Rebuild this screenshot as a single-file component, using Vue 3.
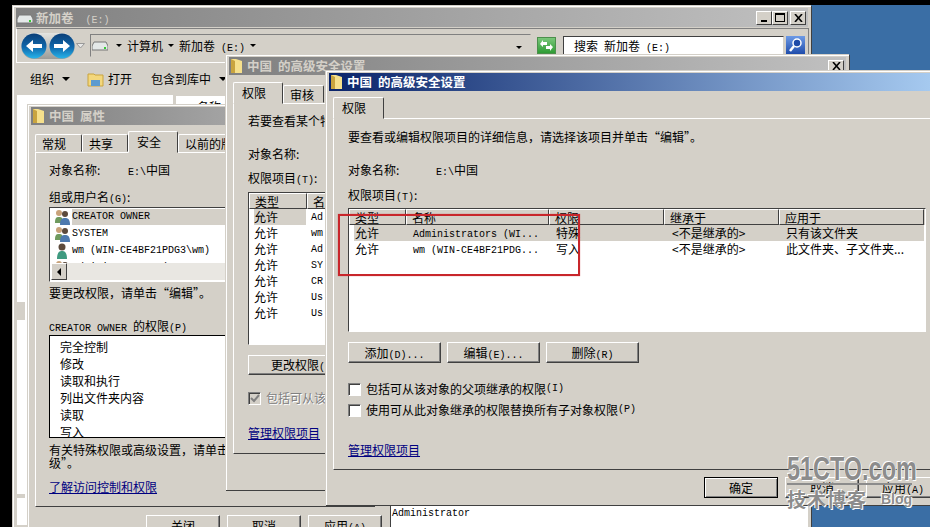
<script setup>
const propUsers = [
  { name: 'CREATOR OWNER', group: true },
  { name: 'SYSTEM', group: true },
  { name: 'wm (WIN-CE4BF21PDG3\\wm)', group: false },
  { name: 'Administrators (WIN-CE4BF21', group: true }
]
const propPerms = ['完全控制', '修改', '读取和执行', '列出文件夹内容', '读取', '写入']
const backRows = ['Ad', 'wm', 'Ad', 'SY', 'CR', 'Us', 'Us']
const columns = [
  { label: '类型', width: 57 },
  { label: '名称', width: 143 },
  { label: '权限', width: 115 },
  { label: '继承于', width: 115 },
  { label: '应用于', width: 145 }
]
const rows = [
  { type: '允许', name: 'Administrators (WI...', perm: '特殊', from: '<不是继承的>', to: '只有该文件夹' },
  { type: '允许', name: 'wm (WIN-CE4BF21PDG...', perm: '写入', from: '<不是继承的>', to: '此文件夹、子文件夹...' }
]
</script>

<template>
  <div class="desktop">
    <!-- explorer behind everything -->
    <section class="win explorer">
      <header class="title inactive">
        <svg width="16" height="12" viewBox="0 0 16 12"><path d="M2 3h12l2 4v4H0V7z" fill="#e4e8e8" stroke="#777" /><rect x="12" y="8" width="2" height="2" fill="#3c3" /></svg>
        <span class="title-text">新加卷<span class="m">&nbsp;&nbsp;(E:)</span></span>
        <span class="caps">
          <button class="cap"><i class="min"></i></button>
          <button class="cap"><i class="max"></i></button>
          <button class="cap close">
            <svg width="9" height="8" viewBox="0 0 9 8"><path d="M1 0l7 8M8 0L1 8" stroke="#000" stroke-width="1.6" /></svg>
          </button>
        </span>
      </header>
      <div class="addr-row">
        <span class="nav-group">
          <svg width="26" height="26" viewBox="0 0 26 26">
            <defs><linearGradient id="orbA" x1="0" y1="0" x2="0" y2="1"><stop offset="0" stop-color="#0b3f78" /><stop offset="0.55" stop-color="#1068ac" /><stop offset="1" stop-color="#27b4ea" /></linearGradient></defs>
            <circle cx="13" cy="13" r="12.500" fill="url(#orbA)" />
            <path d="M5 13l7-6v4h9v4h-9v4z" fill="#fff" />
          </svg>
          <svg width="26" height="26" viewBox="0 0 26 26">
            <defs><linearGradient id="orbB" x1="0" y1="0" x2="0" y2="1"><stop offset="0" stop-color="#0b3f78" /><stop offset="0.55" stop-color="#1068ac" /><stop offset="1" stop-color="#27b4ea" /></linearGradient></defs>
            <circle cx="13" cy="13" r="12.500" fill="url(#orbB)" />
            <path d="M21 13l-7-6v4H5v4h9v4z" fill="#fff" />
          </svg>
        </span>
        <svg class="nav-drop" width="9" height="6" viewBox="0 0 9 6"><path d="M0.500 0.500h8L4.500 5z" fill="#e8e8e8" stroke="#999" /></svg>
        <div class="addr-box">
          <svg width="16" height="10" viewBox="0 0 16 10"><path d="M2 1h12l2 4v4H0V5z" fill="#e4e8e8" stroke="#777" /><rect x="12" y="6" width="2" height="2" fill="#3c3" /></svg>
          <span class="tri small first"></span><span>计算机</span>
          <span class="tri small"></span><span>新加卷<span class="m">&nbsp;(E:)</span></span>
          <span class="tri small"></span>
          <span class="addr-end"><span class="tri small"></span></span>
        </div>
        <span class="refresh">
          <svg width="19" height="17" viewBox="0 0 19 17">
            <defs><linearGradient id="green" x1="0" y1="0" x2="0" y2="1"><stop offset="0" stop-color="#7cc87c" /><stop offset="1" stop-color="#2c9a32" /></linearGradient></defs>
            <rect x="0.500" y="0.500" width="18" height="16" fill="url(#green)" stroke="#4c8f4c" />
            <path d="M3 7l3-4v2h4v3H6v2zM16 10l-3 4v-2H9V9h4V7z" fill="#fff" />
          </svg>
        </span>
        <div class="search-box">搜索<span class="m">&nbsp;</span>新加卷<span class="m">&nbsp;(E:)</span></div>
        <span class="search-btn">
          <svg width="19" height="19" viewBox="0 0 19 19">
            <defs><linearGradient id="blue" x1="0" y1="0" x2="0" y2="1"><stop offset="0" stop-color="#6d9ae6" /><stop offset="1" stop-color="#1b48a8" /></linearGradient></defs>
            <rect width="19" height="19" fill="url(#blue)" />
            <circle cx="11" cy="7" r="4" fill="#1e4aa8" stroke="#fff" stroke-width="1.500" />
            <path d="M8 10l-4 5" stroke="#fff" stroke-width="2.500" />
          </svg>
        </span>
      </div>
      <div class="tools">
        <span class="tool">组织<span class="tri gap"></span></span>
        <span class="tool open">
          <svg width="17" height="16" viewBox="0 0 17 16"><path d="M1 3h6l1 1h8v11H1z" fill="#f3d77c" stroke="#c9a43f" /><path d="M4 9h9v6H4z" fill="#5c9bd0" /></svg>
          打开
        </span>
        <span class="tool">包含到库中<span class="tri gap"></span></span>
      </div>
      <div class="panes">
        <div class="tree">
          <div class="tree-mark first"></div>
          <div class="tree-mark second"></div>
        </div>
        <div class="files"><span class="col-name">名称</span></div>
      </div>
    </section>

    <!-- properties dialog -->
    <section class="win props">
      <header class="title inactive">
        <svg width="13" height="16" viewBox="0 0 13 16"><path d="M1 1h5l6 2v12H1z" fill="#f6e08c" /><path d="M1 1l4 2v12H1z" fill="#c9a43f" /></svg>
        <span class="title-text">中国<span class="m">&nbsp;</span>属性</span>
      </header>
      <nav class="tabs props-tabs">
        <span class="tab" style="width: 47px">常规</span>
        <span class="tab" style="width: 46px">共享</span>
        <span class="tab on" style="width: 50px">安全</span>
        <span class="tab" style="width: 60px">以前的版本</span>
      </nav>
      <div class="page props-page">
        <div class="kv"><span class="k k1">对象名称:</span><span><span class="m">E:\</span>中国</span></div>
        <div class="lbl users-lbl">组或用户名<span class="m">(G)</span>:</div>
        <div class="sunken users">
          <div class="user-rows">
            <div v-for="(u, i) in propUsers" :key="u.name" class="user-row">
              <svg width="17" height="16" viewBox="0 0 17 16">
                <template v-if="u.group">
                  <circle cx="5" cy="4" r="3" fill="#c8a27a" /><path d="M1 14c0-5 1-6 4-6s4 1 4 6z" fill="#6f9a5e" />
                  <circle cx="11" cy="5" r="3" fill="#5c4a3c" /><path d="M6 16c0-6 2-7 5-7s5 1 5 7z" fill="#4d79ae" />
                </template>
                <template v-else>
                  <circle cx="8" cy="4" r="3.500" fill="#5c4a3c" /><path d="M3 16c0-6 2-8 5-8s5 2 5 8z" fill="#3f9a80" />
                </template>
              </svg>
              <span class="m user-name" :class="{ sel: i === 0 }">{{ u.name }}</span>
            </div>
          </div>
          <div class="hscroll">
            <span class="sb-btn"><i class="left-arrow"></i></span>
          </div>
        </div>
        <div class="lbl change-lbl">要更改权限，请单击“编辑”。</div>
        <div class="lbl perm-lbl"><span class="m">CREATOR OWNER&nbsp;</span>的权限<span class="m">(P)</span></div>
        <div class="perm-list">
          <div v-for="p in propPerms" :key="p" class="perm-row">{{ p }}</div>
        </div>
        <div class="note">有关特殊权限或高级设置，请单击“高级”。</div>
        <a class="link learn">了解访问控制和权限</a>
      </div>
      <div class="props-btns">
        <button class="btn foot">关闭</button>
        <button class="btn foot">取消</button>
        <button class="btn foot">应用<span class="m">(A)</span></button>
      </div>
    </section>

    <!-- advanced settings, behind -->
    <section class="win adv-back">
      <header class="title inactive">
        <svg width="13" height="16" viewBox="0 0 13 16"><path d="M1 1h5l6 2v12H1z" fill="#f6e08c" /><path d="M1 1l4 2v12H1z" fill="#c9a43f" /></svg>
        <span class="title-text">中国<span class="m">&nbsp;</span>的高级安全设置</span>
        <span class="caps"><button class="cap close small-cap"><svg width="9" height="8" viewBox="0 0 9 8"><path d="M1 0l7 8M8 0L1 8" stroke="#000" stroke-width="1.600" /></svg></button></span>
      </header>
      <nav class="tabs back-tabs">
        <span class="tab on" style="width: 50px">权限</span>
        <span class="tab" style="width: 41px">审核</span>
      </nav>
      <div class="page back-page">
        <div class="lbl">若要查看某个特殊权限项目的详细信息</div>
        <div class="lbl back-name">对象名称:</div>
        <div class="lbl back-items">权限项目<span class="m">(T)</span>:</div>
        <div class="sunken back-list">
          <div class="hdr"><span class="hcell" style="width: 58px">类型</span><span class="hcell">名称</span></div>
          <div v-for="(r, i) in backRows" :key="i" class="back-row">
            <span class="back-type" :class="{ sel: i === 0 }">允许</span><span class="m">{{ r }}</span>
          </div>
        </div>
        <button class="btn back-change">更改权限<span class="m">(C)</span></button>
        <label class="check disabled"><span class="box gray">
          <svg width="10" height="10" viewBox="0 0 10 10"><path d="M1 5l3 3 5-6" fill="none" stroke="#808080" stroke-width="2" /></svg>
        </span>包括可从该对象的父项继承的权限</label>
        <a class="link back-link">管理权限项目</a>
      </div>
    </section>

    <!-- what is seen under the front dialog -->
    <div class="under"><span class="m">Administrator</span></div>

    <!-- advanced settings, front -->
    <section class="win adv">
      <header class="title active">
        <svg width="13" height="16" viewBox="0 0 13 16"><path d="M1 1h5l6 2v12H1z" fill="#f6e08c" /><path d="M1 1l4 2v12H1z" fill="#c9a43f" /></svg>
        <span class="title-text">中国<span class="m">&nbsp;</span>的高级安全设置</span>
      </header>
      <nav class="tabs adv-tabs">
        <span class="tab on" style="width: 51px">权限</span>
      </nav>
      <div class="page adv-page">
        <div class="lbl">要查看或编辑权限项目的详细信息，请选择该项目并单击“编辑”。</div>
        <div class="kv adv-kv"><span class="k k3">对象名称:</span><span><span class="m">E:\</span>中国</span></div>
        <div class="lbl adv-items">权限项目<span class="m">(T)</span>:</div>
        <div class="sunken adv-list">
          <div class="hdr">
            <span v-for="c in columns" :key="c.label" class="hcell" :style="{ width: c.width + 'px' }">{{ c.label }}</span>
          </div>
          <div v-for="(r, i) in rows" :key="i" class="adv-row" :class="{ sel: i === 0 }">
            <span class="cell" style="width: 58px">{{ r.type }}</span>
            <span class="cell m" style="width: 143px">{{ r.name }}</span>
            <span class="cell" style="width: 116px">{{ r.perm }}</span>
            <span class="cell" style="width: 114px">{{ r.from }}</span>
            <span class="cell">{{ r.to }}</span>
          </div>
        </div>
        <div class="adv-btns">
          <button class="btn adv-btn">添加<span class="m">(D)...</span></button>
          <button class="btn adv-btn">编辑<span class="m">(E)...</span></button>
          <button class="btn adv-btn">删除<span class="m">(R)</span></button>
        </div>
        <label class="check adv-c1"><span class="box"></span>包括可从该对象的父项继承的权限<span class="m">(I)</span></label>
        <label class="check adv-c2"><span class="box"></span>使用可从此对象继承的权限替换所有子对象权限<span class="m">(P)</span></label>
        <a class="link adv-link">管理权限项目</a>
      </div>
      <div class="adv-foot">
        <button class="btn foot default">确定</button>
        <button class="btn foot">取消</button>
        <button class="btn foot">应用<span class="m">(A)</span></button>
      </div>
    </section>

    <!-- annotation and watermark lie over the screenshot -->
    <div class="red-box"></div>
    <div class="mark">
      <div class="mark-top">51CTO.com</div>
      <div class="mark-line"></div>
      <div class="mark-bottom"><span>技术博客</span><span class="mark-blog">Blog</span></div>
    </div>
  </div>
</template>

<style scoped>
.desktop {
  position: relative;
  width: 930px;
  height: 527px;
  overflow: hidden;
  background: #000;
  font-family: "Noto Sans CJK SC", "Liberation Sans", sans-serif;
  font-size: 12px;
  line-height: 16px;
  color: #000;
}
.desktop::before {
  content: "";
  position: absolute;
  left: 811px;
  top: 5px;
  right: 0;
  bottom: 0;
  background: #3a6ea5;
}
.m {
  font-family: "Liberation Mono", monospace;
  font-size: 10px;
  line-height: 10px;
  white-space: pre;
}
button {
  font: inherit;
  color: inherit;
  padding: 0;
}
.win {
  position: absolute;
  box-sizing: border-box;
  background: #d4d0c8;
  border-top: 1px solid #d4d0c8;
  border-left: 1px solid #d4d0c8;
  box-shadow: inset 1px 1px 0 #fff, 1px 1px 0 #404040;
  padding: 2px 3px 0 3px;
}
.explorer {
  left: 12px;
  top: 5px;
  width: 799px;
  height: 522px;
}
.props {
  left: 27px;
  top: 104px;
  width: 363px;
  height: 431px;
}
.adv-back {
  left: 225px;
  top: 54px;
  width: 624px;
  height: 436px;
}
.adv {
  left: 325px;
  top: 70px;
  width: 610px;
  height: 435px;
}
.title {
  display: flex;
  align-items: center;
  height: 18px;
  padding-left: 1px;
  color: #fff;
  font-weight: 700;
}
.title.inactive {
  background: linear-gradient(90deg, #808080, #c0c0c0);
  color: #d4d0c8;
}
.title.active {
  background: linear-gradient(90deg, #0a246a, #a6caf0);
}
.title-text {
  margin-left: 4px;
  font-size: 12.500px;
}
.title-text .m {
  font-weight: 400;
}
.explorer .title {
  height: 19px;
}
.explorer .title-text {
  margin-left: 3px;
}
.caps {
  display: flex;
  margin-left: auto;
  margin-right: 2px;
}
.cap {
  display: flex;
  align-items: center;
  justify-content: center;
  box-sizing: border-box;
  width: 16px;
  height: 14px;
  background: #d4d0c8;
  border: 1px solid;
  border-color: #fff #404040 #404040 #fff;
}
.cap.close {
  margin-left: 2px;
}
.small-cap {
  height: 13px;
}
.min {
  width: 6px;
  height: 2px;
  margin-top: 7px;
  background: #000;
}
.max {
  box-sizing: border-box;
  width: 10px;
  height: 9px;
  border: 1px solid #000;
  border-top-width: 2px;
}
.addr-row {
  display: flex;
  align-items: center;
  box-sizing: border-box;
  height: 35px;
  margin: 1px -1px 0 0;
  padding: 0 3px 0 4px;
  border: 1px solid;
  border-color: #808080 #808080 #fff #fff;
}
.nav-group {
  display: flex;
  gap: 2px;
  border-radius: 13px;
  background: linear-gradient(#e4e4e0, #9c9c98);
}
.nav-drop {
  flex: none;
  margin: 0 5px 0 1px;
}
.addr-box {
  display: flex;
  align-items: center;
  flex: none;
  box-sizing: border-box;
  width: 441px;
  height: 23px;
  padding-left: 1px;
  border: 1px solid;
  border-color: #808080 #d4d0c8 #d4d0c8 #808080;
}
.addr-box > span {
  margin-right: 5px;
}
.addr-end {
  margin-left: auto;
  margin-right: 0 !important;
  padding-right: 8px;
}
.tri {
  display: inline-block;
  width: 0;
  height: 0;
  border: 4px solid transparent;
  border-top-color: #000;
  border-bottom: 0;
  vertical-align: middle;
}
.tri.small {
  border-width: 3px 3px 0;
}
.tri.first,
.tri.gap {
  margin-left: 8px;
}
.refresh {
  display: flex;
  margin-left: 6px;
}
.search-box {
  flex: none;
  box-sizing: border-box;
  width: 221px;
  height: 20px;
  margin-left: 7px;
  padding: 1px 0 0 10px;
  background: #fff;
  border: 1px solid;
  border-color: #404040 #d4d0c8 #d4d0c8 #404040;
}
.search-btn {
  display: flex;
  margin-left: 2px;
}
.tools {
  display: flex;
  align-items: center;
  height: 32px;
  padding-left: 14px;
}
.tool {
  display: flex;
  align-items: center;
  margin-right: 17px;
}
.tool.open {
  gap: 4px;
  margin-right: 19px;
}
.panes {
  display: flex;
  gap: 3px;
}
.tree {
  box-sizing: border-box;
  width: 156px;
  height: 430px;
  margin-left: 1px;
  padding-top: 207px;
  background: #fff;
}
.tree-mark {
  width: 8px;
  background: #d4d0c8;
}
.tree-mark.first {
  height: 18px;
}
.tree-mark.second {
  height: 4px;
  margin-top: 174px;
}
.files {
  flex: 1;
  height: 430px;
  padding: 3px 0 0 21px;
  background: #fff;
  border-top: 1px solid #d4d0c8;
  box-sizing: border-box;
}
.col-name {
  display: block;
}
.tabs {
  display: flex;
  align-items: flex-end;
  padding-left: 4px;
}
.adv-tabs {
  height: 27px;
}
.back-tabs {
  height: 28px;
}
.props-tabs {
  height: 27px;
}
.tab {
  box-sizing: border-box;
  height: 18px;
  padding: 1px 0 0 6px;
  border: 1px solid;
  border-color: #fff #404040 transparent #fff;
  border-radius: 2px 2px 0 0;
  white-space: nowrap;
  overflow: hidden;
}
.tab.on {
  position: relative;
  z-index: 1;
  height: 22px;
  margin-bottom: -1px;
  padding: 2px 0 0 8px;
  background: #d4d0c8;
  border-bottom-color: #d4d0c8;
}
.page {
  box-sizing: border-box;
  border: 1px solid;
  border-color: #fff #404040 #404040 #fff;
}
.props-page {
  width: 340px;
  height: 355px;
  margin-left: 4px;
  padding: 9px 13px;
}
.back-page {
  height: 351px;
  margin: 0 4px;
  padding: 9px 14px;
}
.adv-page {
  height: 352px;
  margin: 0 0 0 4px;
  padding: 10px 14px;
}
.kv {
  display: flex;
}
.k1 {
  width: 79px;
}
.k3 {
  width: 88px;
}
.lbl {
  white-space: nowrap;
}
.users-lbl {
  margin-top: 11px;
}
.sunken {
  box-sizing: border-box;
  background: #fff;
  border: 1px solid;
  border-color: #404040 #fff #fff #404040;
}
.users {
  width: 190px;
  height: 75px;
  margin-top: 2px;
  overflow: hidden;
}
.user-rows {
  height: 55px;
  overflow: hidden;
  padding-left: 4px;
}
.user-row {
  display: flex;
  align-items: center;
  height: 17px;
}
.user-name {
  flex: 1;
  margin-left: 1px;
  line-height: 16px;
}
.user-name.sel,
.back-type.sel {
  background: #d4d0c8;
}
.hscroll {
  display: flex;
  height: 17px;
  margin-left: 1px;
  background: #e9e7e2;
}
.sb-btn {
  display: flex;
  align-items: center;
  justify-content: center;
  box-sizing: border-box;
  width: 16px;
  background: #d4d0c8;
  border: 1px solid;
  border-color: #fff #404040 #404040 #fff;
}
.left-arrow {
  width: 0;
  height: 0;
  border: 4px solid transparent;
  border-right-color: #000;
  border-left: 0;
}
.change-lbl {
  margin-top: 3px;
}
.perm-lbl {
  margin-top: 17px;
}
.perm-list {
  box-sizing: border-box;
  width: 190px;
  height: 103px;
  margin-top: 1px;
  overflow: hidden;
  padding: 3px 0 0 10px;
  background: #fff;
  border: 1px solid #000;
}
.perm-row {
  height: 17px;
}
.note {
  width: 204px;
  margin-top: 5px;
  line-height: 13px;
}
.link {
  display: block;
  color: #000080;
  text-decoration: underline;
}
.learn {
  margin-top: 10px;
}
.props-btns {
  display: flex;
  gap: 7px;
  margin: 8px 0 0 115px;
}
.btn {
  box-sizing: border-box;
  background: #d4d0c8;
  border: 1px solid;
  border-color: #fff #404040 #404040 #fff;
  box-shadow: inset -1px -1px 0 #808080;
}
.foot {
  flex: none;
  width: 74px;
  height: 21px;
}
.back-name {
  margin-top: 17px;
}
.back-items {
  margin-top: 8px;
}
.back-list {
  height: 153px;
  margin-top: 6px;
  overflow: hidden;
}
.hdr {
  display: flex;
  height: 16px;
  background: #d4d0c8;
}
.hcell {
  flex: none;
  box-sizing: border-box;
  padding-left: 5px;
  line-height: 15px;
  white-space: nowrap;
  border: 1px solid;
  border-color: #fff #404040 #404040 #fff;
}
.back-row {
  display: flex;
  height: 16px;
  padding-left: 5px;
}
.back-type {
  width: 52px;
  margin-right: 5px;
}
.back-row .m {
  line-height: 18px;
}
.back-change {
  display: block;
  width: 112px;
  height: 20px;
  margin-top: 10px;
}
.check {
  display: flex;
  align-items: center;
  white-space: nowrap;
}
.check.disabled {
  margin-top: 15px;
  color: #808080;
  text-shadow: 1px 1px 0 #fff;
}
.box {
  display: flex;
  align-items: center;
  justify-content: center;
  box-sizing: border-box;
  flex: none;
  width: 13px;
  height: 13px;
  margin-right: 5px;
  background: #fff;
  border: 1px solid;
  border-color: #808080 #fff #fff #808080;
  box-shadow: inset 1px 1px 0 #404040;
}
.box.gray {
  background: #d4d0c8;
}
.back-link {
  margin-top: 19px;
}
.under {
  position: absolute;
  left: 390px;
  top: 505px;
  width: 421px;
  height: 22px;
  padding-left: 1px;
  box-sizing: border-box;
  background: #fff;
  border-left: 1px solid #404040;
  border-right: 3px solid #d4d0c8;
  line-height: 12px;
}
.adv-kv {
  margin-top: 17px;
}
.adv-items {
  margin-top: 9px;
}
.adv-list {
  width: 578px;
  height: 124px;
  margin-top: 5px;
}
.adv-row {
  display: flex;
  width: 570px;
  height: 16px;
  margin-left: 5px;
}
.adv-row.sel {
  background: #d4d0c8;
}
.cell {
  flex: none;
  line-height: 16px;
  white-space: pre;
}
.cell.m {
  line-height: 19px;
}
.adv-row .cell:first-child {
  margin-left: 1px;
}
.adv-btns {
  display: flex;
  gap: 6px;
  margin-top: 10px;
}
.adv-btn {
  width: 93px;
  height: 21px;
}
.adv-c1 {
  margin-top: 18px;
}
.adv-c2 {
  margin-top: 5px;
}
.adv-link {
  margin-top: 24px;
}
.adv-foot {
  display: flex;
  gap: 7px;
  margin: 7px 0 0 375px;
}
.default {
  border-color: #000;
  box-shadow: inset 1px 1px 0 #fff, inset -1px -1px 0 #808080;
}
.red-box {
  position: absolute;
  left: 338px;
  top: 214px;
  width: 238px;
  height: 58px;
  border: 2px solid #c8262b;
  box-shadow: 0 0 1px rgba(200, 38, 43, 0.6);
}
.mark {
  position: absolute;
  left: 787px;
  top: 456px;
  width: 125px;
  color: #8c8c8c;
  font-weight: 700;
  text-shadow: 1px 1px 0 #fff, -1px -1px 0 #fff;
}
.mark-top {
  font-family: "Liberation Sans", sans-serif;
  font-size: 33px;
  line-height: 26px;
  white-space: nowrap;
  transform: scaleX(0.71);
  transform-origin: left center;
}
.mark-line {
  height: 2px;
  margin-top: 1px;
  background: #8c8c8c;
}
.mark-bottom {
  display: flex;
  align-items: center;
  justify-content: space-between;
  margin-top: 4px;
  font-size: 19px;
  line-height: 20px;
}
.mark-bottom span:first-child {
  letter-spacing: 1px;
}
.mark-blog {
  font-family: "Liberation Sans", sans-serif;
  font-size: 14px;
}
</style>

<style>
html,
body {
  margin: 0;
  background: #000;
}
</style>
